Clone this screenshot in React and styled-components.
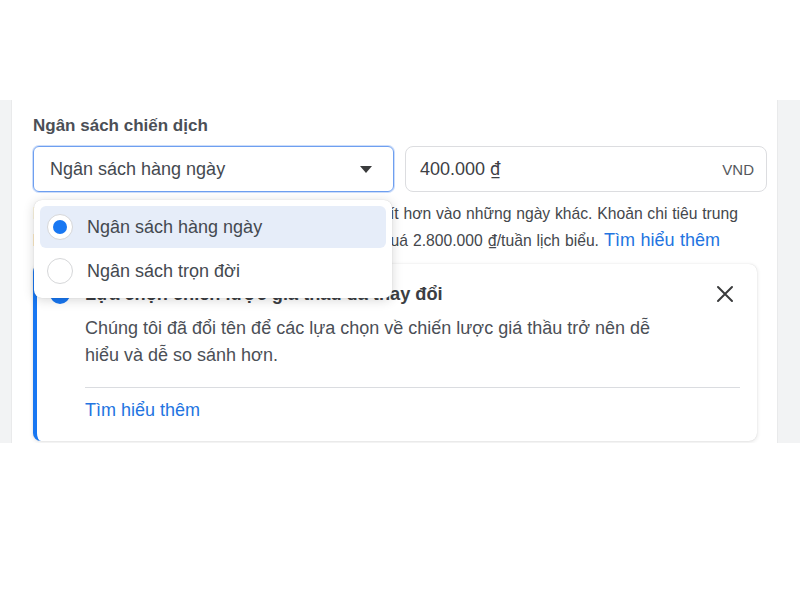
import React from "react";
import styled, { createGlobalStyle } from "styled-components";

const GlobalStyle = createGlobalStyle`
  body {
    margin: 0;
    background: #fff;
    font-family: "Liberation Sans", Arial, sans-serif;
    color: #444950;
  }
`;

const Page = styled.div`
  padding-top: 100px;
  display: flex;
  height: 343px;
`;

const SideStrip = styled.div`
  box-sizing: border-box;
  width: ${(p) => p.w}px;
  background: #f2f3f4;
  border-${(p) => (p.left ? "right" : "left")}: 1px solid #e9eaeb;
`;

const Panel = styled.div`
  flex: 1;
  padding: 16px 10px 0 21px;
  background: #fff;
`;

const Label = styled.div`
  font-size: 17px;
  font-weight: bold;
  line-height: 20px;
  color: #4b4f56;
  margin-bottom: 10px;
`;

const FieldRow = styled.div`
  display: grid;
  grid-template-columns: 361px 1fr;
  gap: 11px;
`;

const SelectWrap = styled.div`
  position: relative;
`;

const SelectBox = styled.div`
  height: 46px;
  box-sizing: border-box;
  border: 1px solid #6e9ff0;
  box-shadow: 0 0 0 1px rgba(110, 159, 240, 0.35);
  border-radius: 6px;
  display: flex;
  align-items: center;
  justify-content: space-between;
  padding: 0 21px 0 16px;
  font-size: 18px;
  color: #444950;
`;

const Caret = styled.span`
  width: 0;
  height: 0;
  border-left: 6px solid transparent;
  border-right: 6px solid transparent;
  border-top: 7px solid #3a3b3c;
`;

const AmountBox = styled.div`
  height: 46px;
  box-sizing: border-box;
  border: 1px solid #dcdde0;
  border-radius: 8px;
  display: flex;
  align-items: center;
  justify-content: space-between;
  padding: 0 12px 0 14px;
`;

const Amount = styled.span`
  font-size: 18px;
  color: #3d4045;
`;

const Dong = styled.span`
  font-family: Roboto, "DejaVu Sans", sans-serif;
`;

const Currency = styled.span`
  font-size: 15px;
  color: #55585d;
`;

const Menu = styled.div`
  position: absolute;
  top: 54px;
  left: 1px;
  width: 358px;
  box-sizing: border-box;
  padding: 6px;
  background: #fff;
  border-radius: 8px;
  box-shadow: 0 2px 12px rgba(0, 0, 0, 0.16), 0 0 1px rgba(0, 0, 0, 0.2);
  display: flex;
  flex-direction: column;
  gap: 2px;
  z-index: 2;
`;

const MenuItem = styled.div`
  height: 42px;
  display: flex;
  align-items: center;
  gap: 14px;
  padding-left: 7px;
  border-radius: 6px;
  background: ${(p) => (p.active ? "#e6edf9" : "transparent")};
  font-size: 18px;
  color: #444950;
`;

const Radio = styled.span`
  width: 26px;
  height: 26px;
  box-sizing: border-box;
  border-radius: 50%;
  border: 1px solid #d6d7d9;
  background: #fff;
  display: flex;
  align-items: center;
  justify-content: center;

  &::after {
    content: "";
    width: 14px;
    height: 14px;
    border-radius: 50%;
    background: ${(p) => (p.checked ? "#1877f2" : "transparent")};
  }
`;

const Help = styled.div`
  margin-top: 9px;
  font-size: 15.7px;
  line-height: 26px;
  color: #44474c;
  white-space: nowrap;
`;

const HelpLine = styled.div`
  width: ${(p) => p.w}px;
  text-align: justify;
  text-align-last: justify;
`;

const Link = styled.a`
  color: #2374e1;
  text-decoration: none;
  font-size: 18px;
`;

const Card = styled.div`
  margin-top: 10px;
  width: 724px;
  height: 177px;
  box-sizing: border-box;
  border-left: 4px solid #1877f2;
  border-radius: 8px;
  background: #fff;
  box-shadow: 0 1px 4px rgba(0, 0, 0, 0.12), 0 0 1px rgba(0, 0, 0, 0.15);
  display: flex;
  padding: 20px 17px 0 13px;
  gap: 15px;
`;

const InfoDot = styled.span`
  width: 20px;
  height: 20px;
  border-radius: 50%;
  background: #1877f2;
  flex-shrink: 0;
`;

const CardBody = styled.div`
  flex: 1;
`;

const CardHeader = styled.div`
  display: flex;
  justify-content: space-between;
  align-items: center;
  height: 20px;
`;

const CardTitle = styled.div`
  font-size: 18.2px;
  font-weight: bold;
  color: #3b3e43;
`;

const CloseButton = styled.button`
  width: 24px;
  height: 24px;
  border: none;
  background: none;
  padding: 0;
  margin-right: 3px;
  display: flex;
  align-items: center;
  justify-content: center;
`;

const CardText = styled.p`
  margin: 11px 0 0;
  font-size: 18px;
  line-height: 27px;
  color: #4b4f56;
  max-width: 590px;
`;

const Divider = styled.hr`
  border: none;
  border-top: 1px solid #dadce0;
  margin: 18px 0 12px;
`;

export default function App() {
  return (
    <>
      <GlobalStyle />
      <Page>
        <SideStrip w={12} left />
        <Panel>
          <Label>Ngân sách chiến dịch</Label>
          <FieldRow>
            <SelectWrap>
              <SelectBox>
                <span>Ngân sách hàng ngày</span>
                <Caret />
              </SelectBox>
              <Menu>
                <MenuItem active>
                  <Radio checked />
                  Ngân sách hàng ngày
                </MenuItem>
                <MenuItem>
                  <Radio />
                  Ngân sách trọn đời
                </MenuItem>
              </Menu>
            </SelectWrap>
            <AmountBox>
              <Amount>
                400.000 <Dong>₫</Dong>
              </Amount>
              <Currency>VND</Currency>
            </AmountBox>
          </FieldRow>
          <Help>
            <HelpLine w={705}>
              Bạn có thể chi tiêu nhiều hơn vào một vài ngày và ít hơn vào những
              ngày khác. Khoản chi tiêu trung
            </HelpLine>
            <HelpLine w={687}>
              bình mỗi ngày của bạn trong tuần sẽ không vượt quá 2.800.000{" "}
              <Dong>₫</Dong>/tuần lịch biểu. <Link>Tìm hiểu thêm</Link>
            </HelpLine>
          </Help>
          <Card>
            <InfoDot />
            <CardBody>
              <CardHeader>
                <CardTitle>Lựa chọn chiến lược giá thầu đã thay đổi</CardTitle>
                <CloseButton aria-label="Đóng">
                  <svg width="18" height="18" viewBox="0 0 18 18">
                    <path
                      d="M2 2 L16 16 M16 2 L2 16"
                      stroke="#3a3b3c"
                      strokeWidth="2"
                      strokeLinecap="round"
                    />
                  </svg>
                </CloseButton>
              </CardHeader>
              <CardText>
                Chúng tôi đã đổi tên để các lựa chọn về chiến lược giá thầu trở
                nên dễ hiểu và dễ so sánh hơn.
              </CardText>
              <Divider />
              <Link>Tìm hiểu thêm</Link>
            </CardBody>
          </Card>
        </Panel>
        <SideStrip w={23} />
      </Page>
    </>
  );
}
